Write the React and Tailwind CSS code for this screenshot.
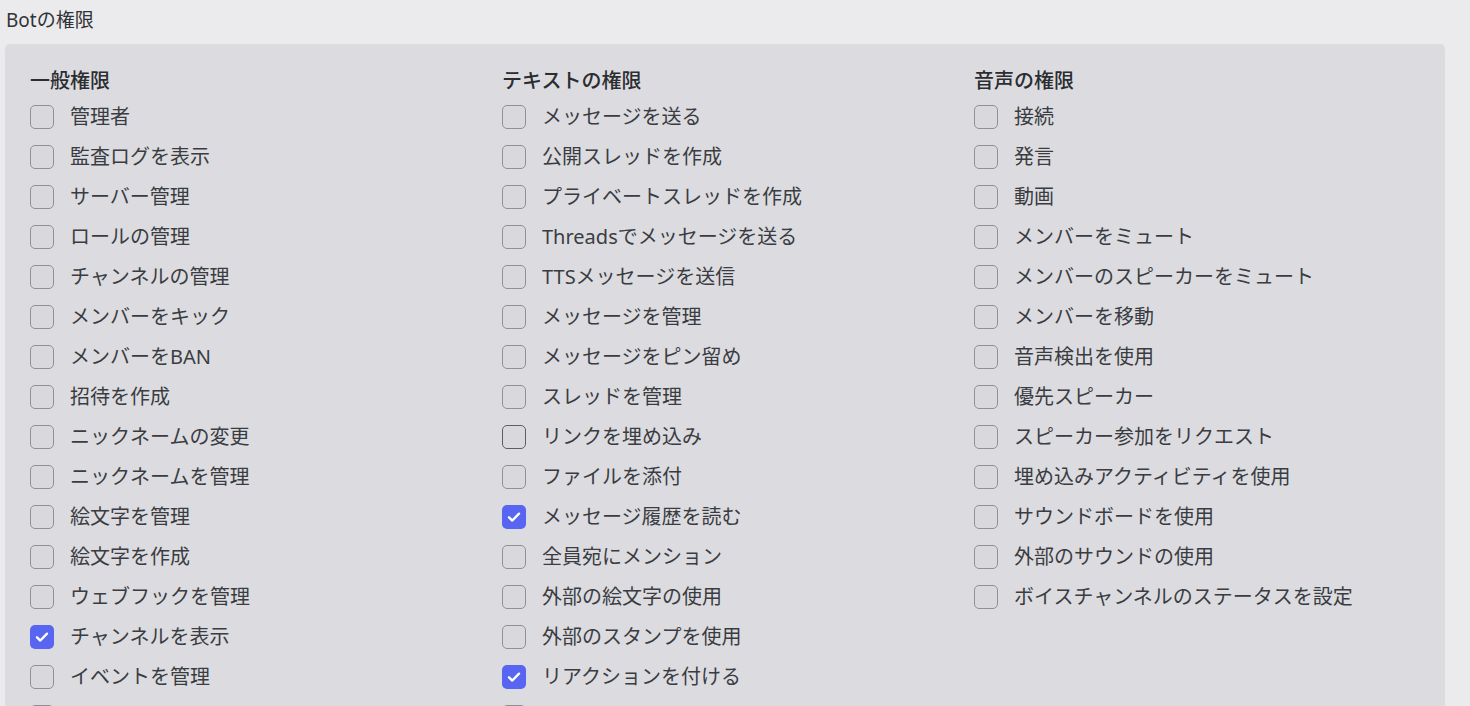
import React from 'react'

const general = [
  ['管理者'], ['監査ログを表示'], ['サーバー管理'], ['ロールの管理'], ['チャンネルの管理'],
  ['メンバーをキック'], ['メンバーをBAN'], ['招待を作成'], ['ニックネームの変更'], ['ニックネームを管理'],
  ['絵文字を管理'], ['絵文字を作成'], ['ウェブフックを管理'], ['チャンネルを表示', true], ['イベントを管理'],
  ['イベントを作成'],
]

const text = [
  ['メッセージを送る'], ['公開スレッドを作成'], ['プライベートスレッドを作成'], ['Threadsでメッセージを送る'],
  ['TTSメッセージを送信'], ['メッセージを管理'], ['メッセージをピン留め'], ['スレッドを管理'],
  ['リンクを埋め込み', false, true], ['ファイルを添付'], ['メッセージ履歴を読む', true], ['全員宛にメンション'],
  ['外部の絵文字の使用'], ['外部のスタンプを使用'], ['リアクションを付ける', true], ['スラッシュコマンドを使用'],
]

const voice = [
  ['接続'], ['発言'], ['動画'], ['メンバーをミュート'], ['メンバーのスピーカーをミュート'], ['メンバーを移動'],
  ['音声検出を使用'], ['優先スピーカー'], ['スピーカー参加をリクエスト'], ['埋め込みアクティビティを使用'],
  ['サウンドボードを使用'], ['外部のサウンドの使用'], ['ボイスチャンネルのステータスを設定'],
]

function Check({ label, checked, hover }) {
  return (
    <label className="flex items-center h-10 cursor-pointer">
      {checked ? (
        <span className="w-6 h-6 rounded-[5px] bg-[#5865f2] flex items-center justify-center shrink-0">
          <svg width="16" height="16" viewBox="0 0 24 24" fill="none" stroke="white" strokeWidth="3.6" strokeLinecap="round" strokeLinejoin="round">
            <path d="M4.5 12.5l5 4.8L19.5 7" />
          </svg>
        </span>
      ) : (
        <span className={'w-6 h-6 rounded-[5px] border bg-[#d9d9dd] shrink-0 ' + (hover ? 'border-[#5c5e66]' : 'border-[#8f9198]')} />
      )}
      <span className="ml-4 text-[20px] leading-none text-[#3a3c42] whitespace-nowrap">{label}</span>
    </label>
  )
}

function Column({ title, items }) {
  return (
    <div>
      <div className="h-[32px] flex items-center text-[20px] font-medium text-[#2b2d31] mt-[4px]">{title}</div>
      {items.map(([l, c, h]) => (
        <Check key={l} label={l} checked={c} hover={h} />
      ))}
    </div>
  )
}

export default function App() {
  return (
    <div className="min-h-screen bg-[#ebebed] overflow-hidden" style={{ fontFamily: '"Noto Sans", "Noto Sans CJK JP", sans-serif' }}>
      <div className="px-[6px] pt-[6px] h-[44px] text-[19px] text-[#313338] leading-[28px]">Botの権限</div>
      <div className="ml-[5px] w-[1440px] bg-[#dcdce0] rounded-[5px] pl-[25px] pt-[17px] pb-6">
        <div className="grid grid-cols-[472px_472px_472px]">
          <Column title="一般権限" items={general} />
          <Column title="テキストの権限" items={text} />
          <Column title="音声の権限" items={voice} />
        </div>
      </div>
    </div>
  )
}
